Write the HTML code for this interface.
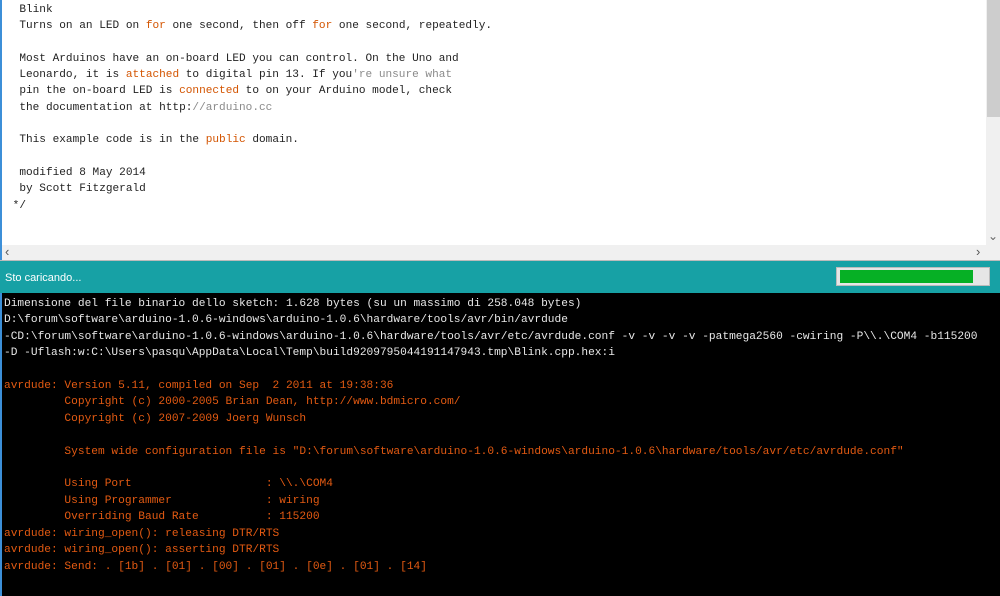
<!DOCTYPE html>
<html><head><meta charset="utf-8"><style>
html,body{margin:0;padding:0;width:1000px;height:596px;overflow:hidden;background:#000;}
body{position:relative;font-family:"Liberation Mono",monospace;font-size:11.1px;}
.ed{position:absolute;left:0;top:0;width:986px;height:245px;background:#fff;border-left:2px solid #3c8fd8;box-sizing:border-box;}
.ed pre{margin:0;padding:2px 0 0 4px;font:inherit;line-height:16.3px;color:#222;}
.o{color:#d35400}.g{color:#8a8a8a}
.vs{position:absolute;left:986px;top:0;width:14px;height:245px;background:#f0f0f0;}
.th{position:absolute;left:987px;top:0;width:13px;height:117px;background:#cdcdcd;}
.hs{position:absolute;left:0;top:245px;width:1000px;height:15px;background:#f0f0f0;border-left:2px solid #3c8fd8;box-sizing:border-box;}
.hs span{position:absolute;top:-1px;font:13px "Liberation Sans",sans-serif;color:#555;}
.ln{position:absolute;left:0;top:260px;width:1000px;height:1px;background:#bbb;}
.tb{position:absolute;left:0;top:261px;width:1000px;height:32px;background:#17a1a5;}
.tb .t{position:absolute;left:5px;top:11px;font:11px "Liberation Sans",sans-serif;color:#fff;}
.pb{position:absolute;left:836px;top:267px;width:154px;height:19px;background:#e6e6e6;border:1px solid #bcbcbc;box-sizing:border-box;}
.pb div{position:absolute;left:3px;top:2px;width:133px;height:13px;background:#06b025;}
.con{position:absolute;left:0;top:293px;width:1000px;height:303px;background:#000;border-left:2px solid #3c8fd8;box-sizing:border-box;}
.con pre{margin:0;padding:3px 0 0 2px;font:inherit;font-size:11.2px;line-height:16.4px;color:#e8e8e8;}
.r{color:#e35a12}
</style></head><body>
<div class="ed"><pre>  Blink
  Turns on an LED on <span class="o">for</span> one second, then off <span class="o">for</span> one second, repeatedly.

  Most Arduinos have an on-board LED you can control. On the Uno and
  Leonardo, it is <span class="o">attached</span> to digital pin 13. If you<span class="g">'re unsure what</span>
  pin the on-board LED is <span class="o">connected</span> to on your Arduino model, check
  the documentation at http:<span class="g">//arduino.cc</span>

  This example code is in the <span class="o">public</span> domain.

  modified 8 May 2014
  by Scott Fitzgerald
 */</pre></div>
<div class="vs"></div><div class="th"></div>
<div style="position:absolute;left:988px;top:229px;font:12px 'Liberation Sans',sans-serif;color:#666;">&#8964;</div>
<div class="hs"><span style="left:3px">&lsaquo;</span><span style="left:974px">&rsaquo;</span></div>
<div class="ln"></div>
<div class="tb"><div class="t">Sto caricando...</div></div>
<div class="pb"><div></div></div>
<div class="con"><pre>Dimensione del file binario dello sketch: 1.628 bytes (su un massimo di 258.048 bytes)
D:\forum\software\arduino-1.0.6-windows\arduino-1.0.6\hardware/tools/avr/bin/avrdude
-CD:\forum\software\arduino-1.0.6-windows\arduino-1.0.6\hardware/tools/avr/etc/avrdude.conf -v -v -v -v -patmega2560 -cwiring -P\\.\COM4 -b115200
-D -Uflash:w:C:\Users\pasqu\AppData\Local\Temp\build9209795044191147943.tmp\Blink.cpp.hex:i
<span class="r">
avrdude: Version 5.11, compiled on Sep  2 2011 at 19:38:36
         Copyright (c) 2000-2005 Brian Dean, http://www.bdmicro.com/
         Copyright (c) 2007-2009 Joerg Wunsch

         System wide configuration file is "D:\forum\software\arduino-1.0.6-windows\arduino-1.0.6\hardware/tools/avr/etc/avrdude.conf"

         Using Port                    : \\.\COM4
         Using Programmer              : wiring
         Overriding Baud Rate          : 115200
avrdude: wiring_open(): releasing DTR/RTS
avrdude: wiring_open(): asserting DTR/RTS
avrdude: Send: . [1b] . [01] . [00] . [01] . [0e] . [01] . [14]</span></pre></div>
</body></html>
